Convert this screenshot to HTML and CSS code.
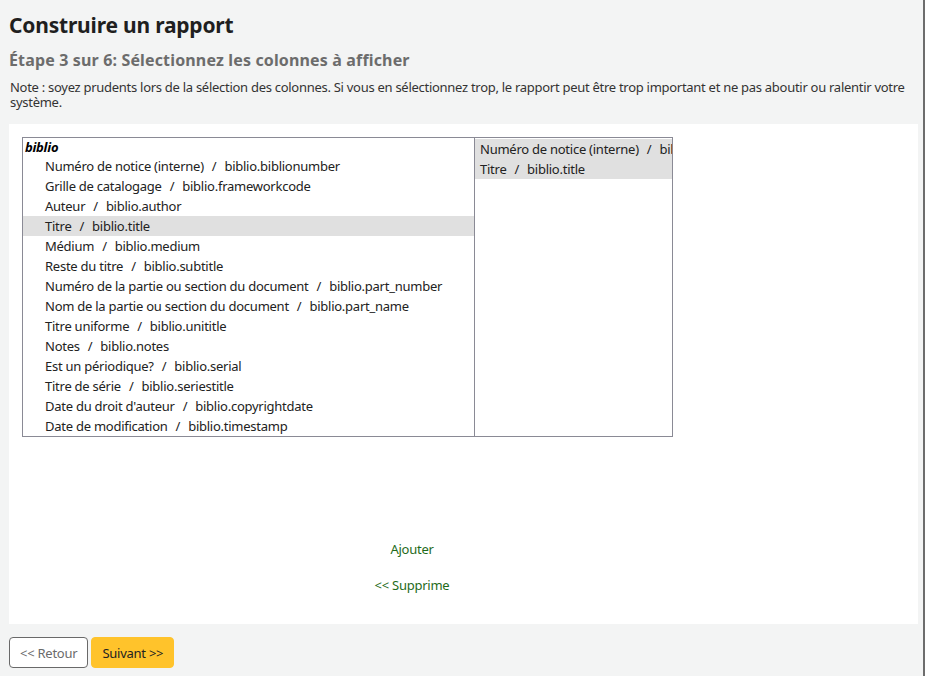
FILE: index.html
```
<!DOCTYPE html>
<html lang="fr">
<head>
    <meta charset="UTF-8">
    <title>Construire un rapport</title>
    <link rel="stylesheet" href="styles.css">
</head>
<body>

    <h1>Construire un rapport</h1>
    <h3>Étape 3 sur 6: Sélectionnez les colonnes à afficher</h3>
    <p class="note">Note : soyez prudents lors de la sélection des colonnes. Si vous en sélectionnez trop, le rapport peut être trop important et ne pas aboutir ou ralentir votre système.</p>

    <div class="page-section">
        <div class="columns">
            <div class="listbox available">
                <div class="group">biblio</div>
                <div class="opt">Numéro de notice (interne)<span class="sep">/</span>biblio.biblionumber</div>
                <div class="opt">Grille de catalogage<span class="sep">/</span>biblio.frameworkcode</div>
                <div class="opt">Auteur<span class="sep">/</span>biblio.author</div>
                <div class="opt selected">Titre<span class="sep">/</span>biblio.title</div>
                <div class="opt">Médium<span class="sep">/</span>biblio.medium</div>
                <div class="opt">Reste du titre<span class="sep">/</span>biblio.subtitle</div>
                <div class="opt">Numéro de la partie ou section du document<span class="sep">/</span>biblio.part_number</div>
                <div class="opt">Nom de la partie ou section du document<span class="sep">/</span>biblio.part_name</div>
                <div class="opt">Titre uniforme<span class="sep">/</span>biblio.unititle</div>
                <div class="opt">Notes<span class="sep">/</span>biblio.notes</div>
                <div class="opt">Est un périodique?<span class="sep">/</span>biblio.serial</div>
                <div class="opt">Titre de série<span class="sep">/</span>biblio.seriestitle</div>
                <div class="opt">Date du droit d'auteur<span class="sep">/</span>biblio.copyrightdate</div>
                <div class="opt">Date de modification<span class="sep">/</span>biblio.timestamp</div>
            </div>
            <div class="listbox chosen">
                <div class="opt selected">Numéro de notice (interne)<span class="sep">/</span>biblio.biblionumber</div>
                <div class="opt selected">Titre<span class="sep">/</span>biblio.title</div>
            </div>
        </div>

        <div class="actions">
            <a href="#">Ajouter</a>
            <a href="#">&lt;&lt; Supprime</a>
        </div>
    </div>

    <div class="nav-buttons">
        <button class="btn back">&lt;&lt; Retour</button>
        <button class="btn next">Suivant &gt;&gt;</button>
    </div>

</body>
</html>
```

FILE: styles.css
```
html {
    background-color: #f3f4f4;
    border-right: 2px solid #6d6d6d;
    min-height: 100%;
}
body {
    margin: 0;
    padding: 0 5px 0 9px;
    font-family: "Noto Sans", "Open Sans", sans-serif;
    font-size: 13px;
    letter-spacing: -0.25px;
    color: #333;
}
h1 {
    margin: 0;
    padding-top: 11px;
    font-size: 21px;
    letter-spacing: -0.2px;
    line-height: 28px;
    color: #1f1f1f;
}
h3 {
    margin: 10px 0 0;
    font-size: 16px;
    letter-spacing: 0.15px;
    line-height: 22px;
    color: #6c6c6c;
}
.note {
    margin: 9px 0 0 1px;
    line-height: 15px;
    letter-spacing: -0.28px;
}
.page-section {
    margin-top: 14px;
    background-color: #fff;
    padding: 13px 13px 0;
    height: 487px;
}
.columns { display: flex; }
.listbox {
    height: 298px;
    border: 1px solid #8a8a95;
    overflow: hidden;
    color: #222;
}
.available { width: 451px; }
.chosen {
    width: 197px;
    margin-left: -1px;
    padding-top: 1px;
    height: 297px;
}
.group {
    font-weight: bold;
    font-style: italic;
    line-height: 18px;
    padding-left: 2px;
    color: #000;
}
.opt {
    line-height: 20px;
    padding-left: 22px;
    white-space: nowrap;
}
.sep { margin: 0 8px; }
.chosen .opt { padding-left: 5px; }
.opt.selected { background-color: #e0e0e0; }
/* add / remove links */
.actions {
    width: 780px;
    display: flex;
    flex-direction: column;
    align-items: center;
    gap: 16px;
    margin-top: 102px;
}
.actions a {
    color: #1f6b1a;
    text-decoration: none;
    line-height: 20px;
}
.nav-buttons {
    display: flex;
    gap: 3px;
    margin-top: 13px;
}
.btn {
    font-family: inherit;
    font-size: 13px;
    letter-spacing: -0.25px;
    height: 31px;
    padding: 0 10px;
    border-radius: 4px;
    cursor: pointer;
}
.back {
    background-color: #fff;
    border: 1px solid #696969;
    color: #6b6b6b;
}
.next {
    background-color: #ffc32b;
    border: 1px solid #ffc32b;
    color: #222;
}
```
